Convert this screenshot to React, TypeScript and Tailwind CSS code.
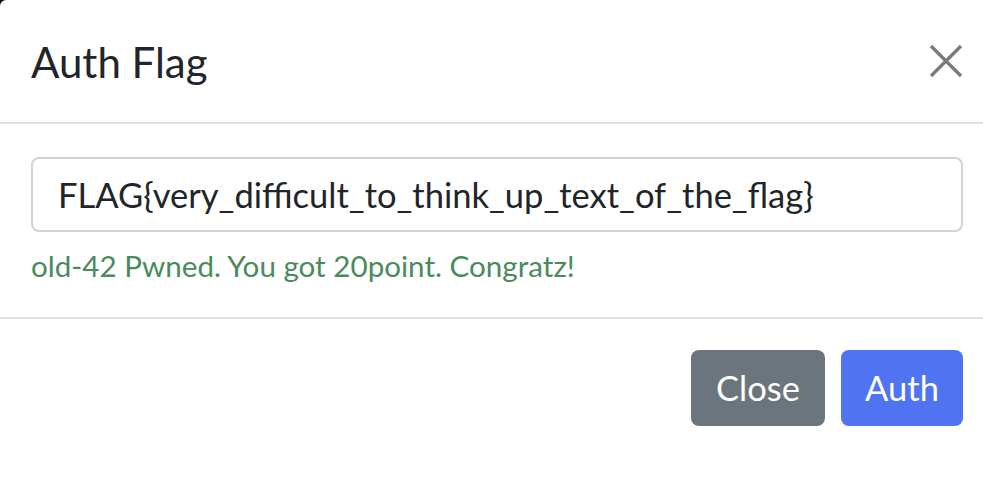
import React from 'react';

const font = { fontFamily: 'Lato, "Noto Sans", sans-serif' };

const App: React.FC = () => {
  return (
    <div className="h-[480px] w-[983px] overflow-hidden bg-black" style={font}>
      <div className="flex h-full flex-col rounded-tl-[6px] bg-white">
        {/* Header */}
        <div className="flex h-[124px] shrink-0 items-center justify-between border-b-2 border-[#dee2e6] pl-[31px] pr-[20px]">
          <h5 className="pt-[2px] text-[42px] leading-none text-[#212529]">Auth Flag</h5>
          <button className="flex h-[34px] w-[34px] items-center justify-center text-[#7a7a7a]">
            <svg viewBox="0 0 34 34" className="h-[34px] w-[34px]" fill="none" stroke="currentColor" strokeWidth="3.2" strokeLinecap="butt">
              <path d="M2 2L32 32M32 2L2 32" />
            </svg>
          </button>
        </div>

        {/* Body */}
        <div className="shrink-0 border-b-2 border-[#dee2e6] pb-[33px] pl-[31px] pr-[20px] pt-[33px]">
          <div className="flex h-[75px] items-center rounded-[8px] border-2 border-[#ced4da] px-[25px] text-[34.5px] text-[#212529]">
            FLAG{'{'}very_difficult_to_think_up_text_of_the_flag{'}'}
          </div>
          <div className="mt-[16px] text-[29.6px] leading-[36px] text-[#4a8a5c]">
            old-42 Pwned. You got 20point. Congratz!
          </div>
        </div>

        {/* Footer */}
        <div className="flex justify-end gap-[16px] pl-[31px] pr-[20px] pt-[31px]">
          <button className="h-[76px] w-[134px] rounded-[8px] bg-[#6c757d] text-[34.5px] text-white">Close</button>
          <button className="h-[76px] w-[122px] rounded-[8px] bg-[#5073f2] text-[34.5px] text-white">Auth</button>
        </div>
      </div>
    </div>
  );
};

export default App;
